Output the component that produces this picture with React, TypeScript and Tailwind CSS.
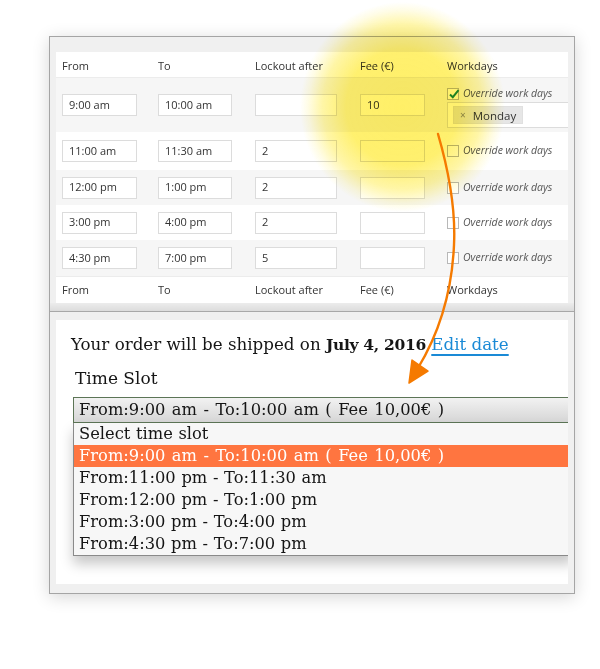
import React from "react";

type Row = { from: string; to: string; lock: string; fee: string; checked?: boolean; bg: string; h: string };

const rows: Row[] = [
  { from: "9:00 am", to: "10:00 am", lock: "", fee: "10", checked: true, bg: "bg-[#f6f6f6]", h: "h-[54px]" },
  { from: "11:00 am", to: "11:30 am", lock: "2", fee: "", bg: "bg-white", h: "h-[38px]" },
  { from: "12:00 pm", to: "1:00 pm", lock: "2", fee: "", bg: "bg-[#f6f6f6]", h: "h-[35px]" },
  { from: "3:00 pm", to: "4:00 pm", lock: "2", fee: "", bg: "bg-white", h: "h-[35px]" },
  { from: "4:30 pm", to: "7:00 pm", lock: "5", fee: "", bg: "bg-[#f6f6f6]", h: "h-[36px]" },
];

function Input({ value, w }: { value: string; w: string }) {
  return (
    <div className={`${w} h-[22px] border border-[#dcdcdc] bg-white pl-[6px] flex items-center text-[11px] text-[#333]`}>
      {value}
    </div>
  );
}

function Check({ checked }: { checked?: boolean }) {
  return (
    <div className="w-[12px] h-[12px] border border-[#b8b8b8] bg-white relative shrink-0">
      {checked && (
        <svg viewBox="0 0 12 12" className="absolute left-[0px] top-[-1px] w-[12px] h-[12px]">
          <path d="M2 6.5 L4.8 9.2 L10.5 2.2" fill="none" stroke="#1f8a4c" strokeWidth="2" />
        </svg>
      )}
    </div>
  );
}

function Override({ checked }: { checked?: boolean }) {
  return (
    <div className="flex items-center gap-[4px]">
      <Check checked={checked} />
      <span className="italic text-[10.5px] text-[#555]">Override work days</span>
    </div>
  );
}

const cols = "grid grid-cols-[96px_97px_105px_87px_127px] items-center";

export default function App() {
  return (
    <div className="relative w-[600px] h-[669px] bg-white overflow-hidden" style={{ fontFamily: '"Open Sans", "Noto Sans", sans-serif' }}>
      <div className="ml-[49px] mt-[36px] w-[526px] h-[558px] border border-[#a5a5a5] bg-[#f0f0f0] shadow-[0_3px_16px_rgba(0,0,0,0.16)] px-[6px] pt-[15px]">
        {/* Admin table */}
        <div className="w-[512px] h-[251px] overflow-hidden bg-white">
          <div className={`${cols} h-[26px] pt-[3px] bg-white border-b border-[#ececec] text-[11px] text-[#333]`}>
            <div className="pl-[6px]">From</div>
            <div className="pl-[6px]">To</div>
            <div className="pl-[6px]">Lockout after</div>
            <div className="pl-[6px]">Fee (€)</div>
            <div className="pl-[6px]">Workdays</div>
          </div>
          {rows.map((r, i) => (
            <div key={i} className={`${cols} ${r.h} ${r.bg}`}>
              <div className="pl-[6px]"><Input value={r.from} w="w-[75px]" /></div>
              <div className="pl-[6px]"><Input value={r.to} w="w-[74px]" /></div>
              <div className="pl-[6px]"><Input value={r.lock} w="w-[82px]" /></div>
              <div className="pl-[6px]"><Input value={r.fee} w="w-[65px]" /></div>
              <div className="pl-[6px]">
                {r.checked ? (
                  <div className="flex flex-col pt-[4px]">
                    <Override checked />
                    <div className="mt-[1px] w-[150px] h-[26px] border border-[#dcdcdc] bg-white flex items-center pl-[5px]">
                      <div className="h-[18px] px-[6px] bg-[#e6e6e6] border border-[#e0e0e0] flex items-center gap-[7px] text-[11.5px] text-[#333]">
                        <span className="text-[10px] text-[#888]">×</span>
                        <span>Monday</span>
                      </div>
                    </div>
                  </div>
                ) : (
                  <Override />
                )}
              </div>
            </div>
          ))}
          <div className={`${cols} h-[27px] bg-white border-t border-[#ececec] text-[11px] text-[#333]`}>
            <div className="pl-[6px]">From</div>
            <div className="pl-[6px]">To</div>
            <div className="pl-[6px]">Lockout after</div>
            <div className="pl-[6px]">Fee (€)</div>
            <div className="pl-[6px]">Workdays</div>
          </div>
        </div>
        <div className="h-[8px] -mx-[6px] bg-gradient-to-b from-[#ececec] to-[#dcdcdc]" />
        <div className="h-px -mx-[6px] bg-[#a8a8a8]" />
        <div className="h-[8px]" />
        {/* Front-end panel */}
        <div className="w-[512px] h-[264px] bg-white overflow-hidden pt-[12px] text-[#151515]" style={{ fontFamily: '"DejaVu Serif", "Liberation Serif", serif' }}>
          <div className="pl-[15px] h-[24px] leading-[24px] text-[16.7px] whitespace-nowrap">
            Your order will be shipped on <b className="text-[15.5px] tracking-[-0.3px]">July 4, 2016</b>{" "}
            <span className="text-[#1a8ad6] underline decoration-[#1a8ad6] decoration-[1.5px] underline-offset-[4px]">Edit date</span>
          </div>
          <div className="pl-[19px] mt-[10px] h-[24px] leading-[24px] text-[17px]">Time Slot</div>
          <div className="ml-[17px] mt-[7px] w-[500px] text-[16.3px] [word-spacing:1.3px]">
            <div className="h-[26px] border border-[#5c7556] bg-gradient-to-b from-[#f2f2f2] to-[#d6d6d6] pl-[5px] flex items-center whitespace-nowrap">
              From:9:00 am - To:10:00 am ( Fee 10,00€ )
            </div>
            <div className="border-x border-b border-[#8a8a8a] bg-[#f7f7f7] shadow-[0_8px_12px_rgba(0,0,0,0.22)] whitespace-nowrap [word-spacing:0.5px]">
              <div className="h-[22px] leading-[22px] pl-[5px]">Select time slot</div>
              <div className="h-[22px] leading-[22px] pl-[5px] bg-[#ff7540] text-white [word-spacing:1.3px]">From:9:00 am - To:10:00 am ( Fee 10,00€ )</div>
              <div className="h-[22px] leading-[22px] pl-[5px]">From:11:00 pm - To:11:30 am</div>
              <div className="h-[22px] leading-[22px] pl-[5px]">From:12:00 pm - To:1:00 pm</div>
              <div className="h-[22px] leading-[22px] pl-[5px]">From:3:00 pm - To:4:00 pm</div>
              <div className="h-[22px] leading-[22px] pl-[5px]">From:4:30 pm - To:7:00 pm</div>
            </div>
          </div>
        </div>
      </div>

      {/* Yellow highlight */}
      <div
        className="absolute left-[300px] top-[2px] w-[205px] h-[210px] mix-blend-multiply pointer-events-none"
        style={{
          background:
            "radial-gradient(closest-side, rgba(255,236,70,0.82) 0%, rgba(255,236,70,0.78) 55%, rgba(255,236,70,0.48) 78%, rgba(255,236,70,0.14) 92%, rgba(255,236,70,0) 100%)",
        }}
      />

      {/* Orange arrow */}
      <svg className="absolute left-0 top-0 w-[600px] h-[669px] pointer-events-none" viewBox="0 0 600 669">
        <path d="M438 134 C 447 165 456 205 454 245 C 452 290 441 330 418 368" fill="none" stroke="#f57a00" strokeWidth="2.4" strokeLinecap="round" />
        <path d="M409 383 L412 360 L428 371 Z" fill="#f57a00" stroke="#f57a00" strokeWidth="1.5" strokeLinejoin="round" />
      </svg>
    </div>
  );
}
